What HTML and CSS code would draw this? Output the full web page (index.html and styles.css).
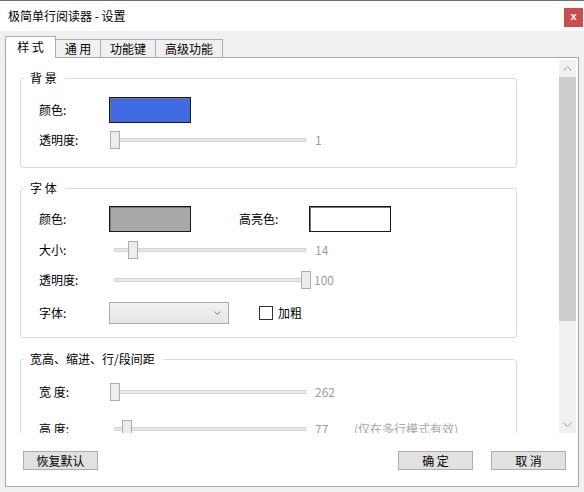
FILE: index.html
```html
<!DOCTYPE html>
<html lang="zh-CN">
<head>
<meta charset="utf-8">
<title>极简单行阅读器 - 设置</title>
<link rel="stylesheet" href="styles.css">
</head>
<body>
<div class="window">
  <div class="titlebar">
    <span class="title">极简单行阅读器 - 设置</span>
    <span class="close">x</span>
  </div>
  <div class="main">
    <div class="tabs">
      <div class="tab active">样 式</div>
      <div class="tab t2">通 用</div>
      <div class="tab t3">功能键</div>
      <div class="tab t4">高级功能</div>
    </div>
    <div class="panel">
      <div class="scroller">
        <div class="content">
          <div class="group g1">
            <span class="legend">背 景</span>
            <div class="row r-swatch">
              <span class="label">颜色:</span>
              <span class="swatch blue"></span>
            </div>
            <div class="row r-slider r1-2">
              <span class="label">透明度:</span>
              <span class="slider"><span class="track"></span><span class="thumb" style="left:1px"></span></span>
              <span class="value">1</span>
            </div>
          </div>

          <div class="group g2">
            <span class="legend">字 体</span>
            <div class="row r-swatch">
              <span class="label">颜色:</span>
              <span class="swatch gray"></span>
              <span class="label hl">高亮色:</span>
              <span class="swatch white"></span>
            </div>
            <div class="row r-slider r2-2">
              <span class="label">大小:</span>
              <span class="slider"><span class="track"></span><span class="thumb" style="left:19px"></span></span>
              <span class="value">14</span>
            </div>
            <div class="row r-slider r2-3">
              <span class="label">透明度:</span>
              <span class="slider"><span class="track"></span><span class="thumb" style="left:192px"></span></span>
              <span class="value v100">100</span>
            </div>
            <div class="row r-select r2-4">
              <span class="label">字体:</span>
              <span class="select"><svg class="chev" width="7" height="4" viewBox="0 0 7 4"><polyline points="0.5,0.5 3.5,3.5 6.5,0.5" fill="none" stroke="#707070" stroke-width="1"/></svg></span>
              <span class="checkbox"></span>
              <span class="cblabel">加粗</span>
            </div>
          </div>

          <div class="group g3">
            <span class="legend">宽高、缩进、行/段间距</span>
            <div class="row r-slider">
              <span class="label">宽 度:</span>
              <span class="slider"><span class="track"></span><span class="thumb" style="left:1px"></span></span>
              <span class="value">262</span>
            </div>
            <div class="row r-slider r3-2">
              <span class="label">高 度:</span>
              <span class="slider"><span class="track"></span><span class="thumb" style="left:13px"></span></span>
              <span class="value">77</span>
              <span class="note">(仅在多行模式有效)</span>
            </div>
          </div>
        </div>
        <div class="scrollbar">
          <div class="sb-btn"><svg width="9" height="5" viewBox="0 0 9 5"><polyline points="0.5,4.5 4.5,0.5 8.5,4.5" fill="none" stroke="#a3a3a3" stroke-width="1"/></svg></div>
          <div class="sb-thumb"></div>
          <div class="sb-track"></div>
          <div class="sb-btn"><svg width="9" height="5" viewBox="0 0 9 5"><polyline points="0.5,0.5 4.5,4.5 8.5,0.5" fill="none" stroke="#a3a3a3" stroke-width="1"/></svg></div>
        </div>
      </div>
      <div class="buttons">
        <button class="btn">恢复默认</button>
        <span class="spacer"></span>
        <button class="btn">确 定</button>
        <button class="btn">取 消</button>
      </div>
    </div>
  </div>
</div>
</body>
</html>
```
FILE: styles.css
```css
* { box-sizing: border-box; }
html, body { margin: 0; padding: 0; }
body {
  font-family: "Noto Sans CJK SC", "Microsoft YaHei", "Noto Sans", sans-serif;
  font-size: 12px;
  line-height: 16px;
  color: #000;
  background: #f0f0f0;
}
.window {
  width: 584px;
  height: 492px;
  border-top: 1px solid #6e6e6e;
  background: #f0f0f0;
  display: flex;
  flex-direction: column;
  overflow: hidden;
}
.titlebar {
  height: 30px;
  background: #fff;
  display: flex;
  align-items: center;
  padding-left: 8px;
  padding-right: 1px;
}
.title { flex: 1; margin-top: -1px; }
.close {
  width: 19px;
  height: 19px;
  margin-top: 3px;
  background: #c94f4f;
  color: #fff;
  font-family: "Liberation Sans", Arial, sans-serif;
  font-weight: bold;
  font-size: 11px;
  line-height: 17px;
  text-align: center;
}
.main {
  flex: 1;
  padding: 0 5px 5px 5px;
  display: flex;
  flex-direction: column;
}
.tabs {
  height: 26px;
  display: flex;
  align-items: flex-end;
}
.tab {
  height: 18px;
  border: 1px solid #adadad;
  border-bottom: none;
  border-left: none;
  background: #f0f0f0;
  text-align: center;
  line-height: 16px;
  padding-top: 1px;
}
.tab.active {
  width: 51px;
  height: 22px;
  margin-bottom: -1px;
  border-left: 1px solid #adadad;
  background: #fff;
  position: relative;
  z-index: 1;
  padding-top: 2px;
}
.tab.t2 { width: 45px; }
.tab.t3 { width: 55px; }
.tab.t4 { width: 67px; }
.panel {
  flex: 1;
  border: 1px solid #a9a9a9;
  background: #fff;
  padding: 2px 2px 0 0;
  display: flex;
  flex-direction: column;
}
.scroller {
  height: 373px;
  display: flex;
}
.content {
  flex: 1;
  overflow: hidden;
  padding-left: 14px;
}
.group {
  position: relative;
  width: 497px;
  border: 1px solid #dcdcdc;
  border-radius: 3px;
}
.legend {
  position: absolute;
  top: -9px;
  left: 3px;
  padding: 0 8px 0 6px;
  background: #fff;
  line-height: 16px;
  white-space: pre;
}
.g1 { margin-top: 18px; padding-top: 18px; padding-bottom: 17px; }
.g2 { margin-top: 20px; padding-top: 17px; padding-bottom: 13px; }
.g3 { margin-top: 21px; padding-top: 22px; padding-bottom: 20px; }
.row {
  display: flex;
  align-items: center;
  margin-left: 18px;
}
.r-swatch { height: 26px; }
.r-slider { height: 20px; }
.r-select { height: 22px; }
.r1-2 { margin-top: 7px; }
.r2-2 { margin-top: 8px; }
.r2-3 { margin-top: 10px; }
.r2-4 { margin-top: 12px; }
.r3-2 { margin-top: 17px; }
.label { width: 70px; flex: none; }
.label.hl { margin-left: 48px; }
.swatch {
  width: 82px;
  height: 26px;
  border: 1px solid #1a1a1a;
  box-shadow: inset 0 1px 0 #777, inset 1px 0 0 #777;
}
.swatch.blue { background: #4169e1; }
.swatch.gray { background: #a9a9a9; }
.swatch.white { background: #fff; }
.slider {
  position: relative;
  width: 202px;
  height: 20px;
  flex: none;
}
.track {
  position: absolute;
  left: 5px;
  right: 5px;
  top: 8px;
  height: 4px;
  background: #e7e7e7;
  border: 1px solid #d6d6d6;
}
.thumb {
  position: absolute;
  top: 1px;
  width: 10px;
  height: 18px;
  background: #ececec;
  border: 1px solid #adadad;
}
.value {
  width: 39px;
  margin-left: 4px;
  color: #9d9d9d;
}
.value.v100 { margin-left: 3px; }
.note { color: #a8a8a8; }
.select {
  width: 120px;
  height: 22px;
  border: 1px solid #acacac;
  background: linear-gradient(#f2f2f2, #e5e5e5);
  display: flex;
  align-items: center;
  justify-content: flex-end;
  padding-right: 7px;
}
.chev { display: block; }
.checkbox {
  width: 14px;
  height: 14px;
  margin-left: 30px;
  border: 1px solid #333;
  background: #fff;
}
.cblabel { margin-left: 5px; }
.scrollbar {
  width: 17px;
  flex: none;
  background: #f0f0f0;
  display: flex;
  flex-direction: column;
}
.sb-btn {
  height: 17px;
  display: flex;
  align-items: center;
  justify-content: center;
}
.sb-thumb {
  height: 244px;
  background: #cdcdcd;
}
.sb-track { flex: 1; }
.buttons {
  display: flex;
  align-items: center;
  padding: 0 10px 0 17px;
  margin-top: 18px;
}
.spacer { flex: 1; }
.btn {
  width: 75px;
  height: 19px;
  padding: 0;
  border: 1px solid #adadad;
  background: #e1e1e1;
  font-family: inherit;
  font-size: 12px;
  line-height: 16px;
  color: #000;
}
.btn + .btn { margin-left: 18px; }
```
